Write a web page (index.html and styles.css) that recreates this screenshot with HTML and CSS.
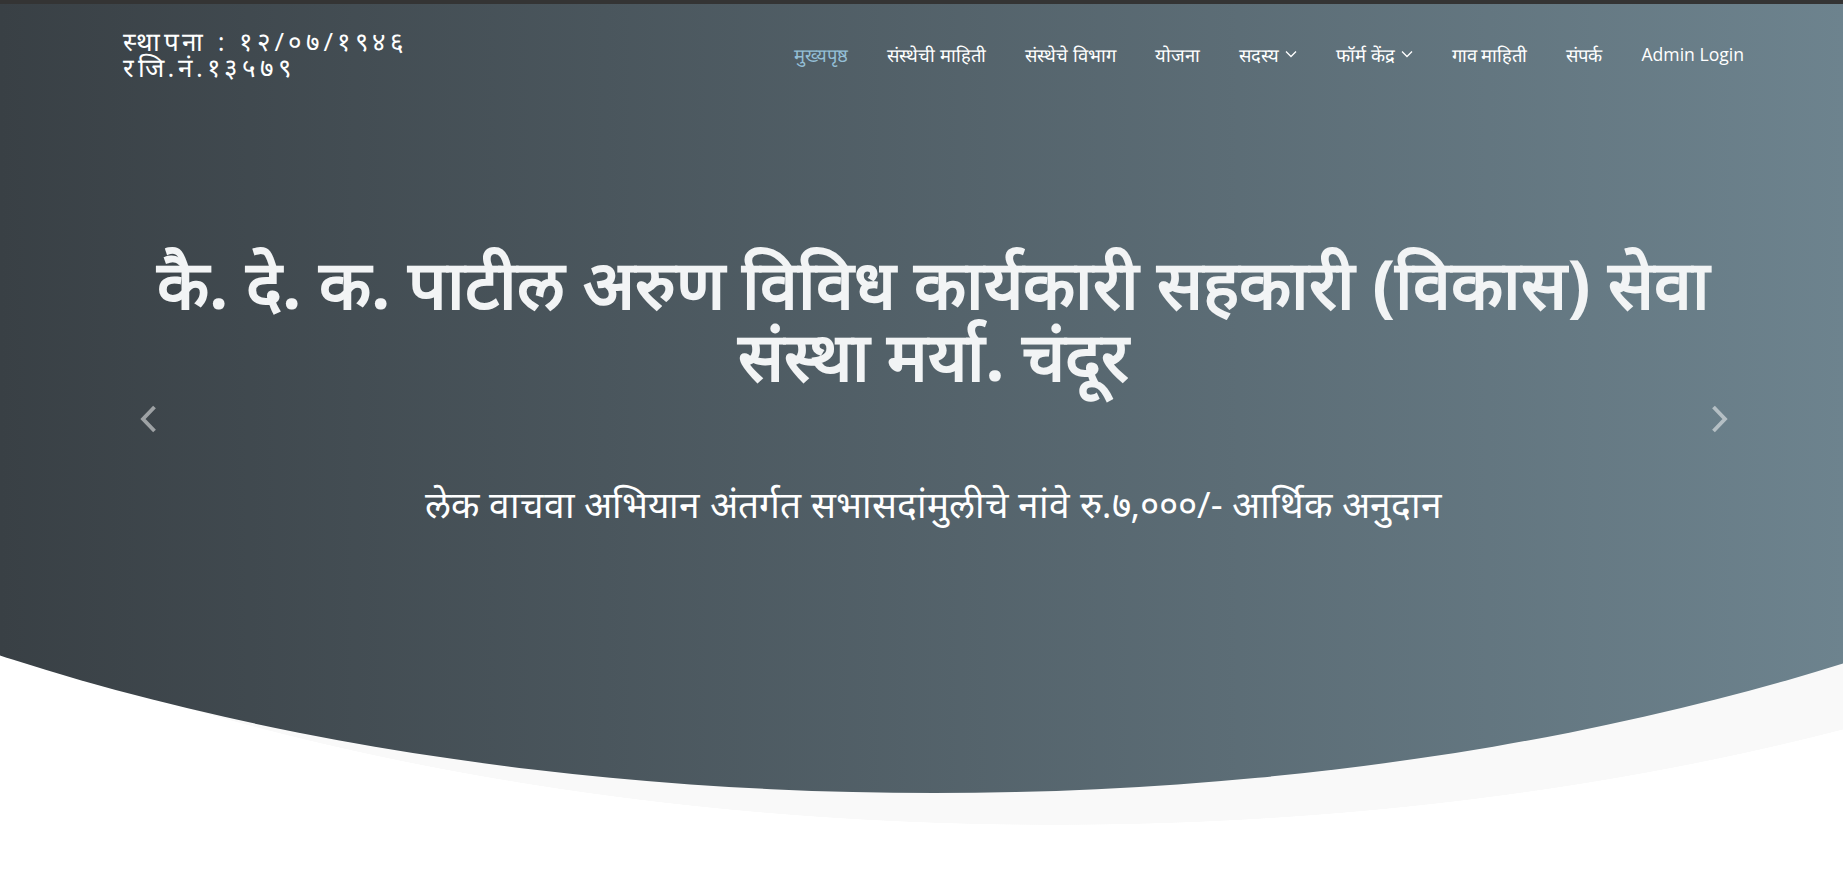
FILE: index.html
```html
<!DOCTYPE html>
<html lang="mr">
<head>
<meta charset="utf-8">
<title>संस्था</title>
<link rel="stylesheet" href="styles.css">
</head>
<body>
<div class="hero-wrap">
  <section class="hero">
    <header class="topbar">
      <div class="brand">
        <div class="brand-line">स्थापना : १२/०७/१९४६</div>
        <div class="brand-line">रजि.नं.१३५७९</div>
      </div>
      <nav class="menu">
        <a class="menu-item active" href="#">मुख्यपृष्ठ</a>
        <a class="menu-item" href="#">संस्थेची माहिती</a>
        <a class="menu-item" href="#">संस्थेचे विभाग</a>
        <a class="menu-item" href="#">योजना</a>
        <a class="menu-item" href="#">सदस्य <svg class="caret" viewBox="0 0 12 8"><polyline points="1,1.5 6,6.5 11,1.5"/></svg></a>
        <a class="menu-item" href="#">फॉर्म केंद्र <svg class="caret" viewBox="0 0 12 8"><polyline points="1,1.5 6,6.5 11,1.5"/></svg></a>
        <a class="menu-item" href="#">गाव माहिती</a>
        <a class="menu-item" href="#">संपर्क</a>
        <a class="menu-item latin" href="#">Admin Login</a>
      </nav>
    </header>
    <div class="carousel">
      <div class="slide">
        <h2 class="slide-title">कै. दे. क. पाटील अरुण विविध कार्यकारी सहकारी (विकास) सेवा संस्था मर्या. चंदूर</h2>
        <p class="slide-text">लेक वाचवा अभियान अंतर्गत सभासदांमुलीचे नांवे रु.७,०००/- आर्थिक अनुदान</p>
      </div>
      <a class="ctrl ctrl-prev" href="#"><svg viewBox="0 0 17 28"><polyline points="14.5,2 3,14 14.5,26"/></svg></a>
      <a class="ctrl ctrl-next" href="#"><svg viewBox="0 0 17 28"><polyline points="2.5,2 14,14 2.5,26"/></svg></a>
    </div>
  </section>
</div>
</body>
</html>
```
FILE: styles.css
```css
* { box-sizing: border-box; }
html, body { margin: 0; padding: 0; }
body {
  background: #ffffff;
  font-family: "Open Sans", sans-serif;
  color: #fff;
}
.hero-wrap {
  height: 825px;
  background: radial-gradient(1660px 793px at 1054px 32px, #f9f9f9 calc(100% - 1px), rgba(249,249,249,0) 100%);
}
.hero {
  height: 793px;
  border-top: 4px solid #343434;
  background: linear-gradient(90deg, #394045 0%, #6d838e 100%);
  clip-path: ellipse(1660px 793px at 934px 0);
  padding: 0 99px 0 123px;
  display: flex;
  flex-direction: column;
}
.topbar {
  display: flex;
  justify-content: space-between;
  align-items: center;
  height: 100px;
}
.brand {
  font-size: 26px;
  line-height: 26px;
  letter-spacing: 3.8px;
  color: #fff;
}
.menu {
  display: flex;
  align-items: center;
  gap: 39px;
}
.menu-item {
  color: #fff;
  text-decoration: none;
  font-size: 18.4px;
  display: flex;
  align-items: center;
  gap: 6px;
}
.menu-item.latin { font-size: 17.6px; }
.menu-item.active { color: #94bfd6; }
.caret {
  width: 12px;
  height: 8px;
  fill: none;
  stroke: #fff;
  stroke-width: 1.3;
}
.carousel {
  position: relative;
  flex: 1;
  display: flex;
  align-items: flex-start;
  justify-content: center;
}
.slide {
  text-align: center;
  padding-top: 143px;
  width: 100%;
}
.slide-title {
  margin: 0;
  font-size: 68px;
  line-height: 72px;
  font-weight: 700;
  color: #f2f4f5;
}
.slide-text {
  margin: 87px 0 0;
  font-size: 37px;
  color: #fff;
}
.ctrl {
  position: absolute;
  top: 297px;
  width: 50px;
  height: 36px;
  display: flex;
  align-items: center;
  justify-content: center;
}
.ctrl-prev { left: 0; }
.ctrl-next { right: 0; }
.ctrl svg {
  width: 17px;
  height: 28px;
  fill: none;
  stroke: rgba(255,255,255,0.5);
  stroke-width: 3.8;
}
```
